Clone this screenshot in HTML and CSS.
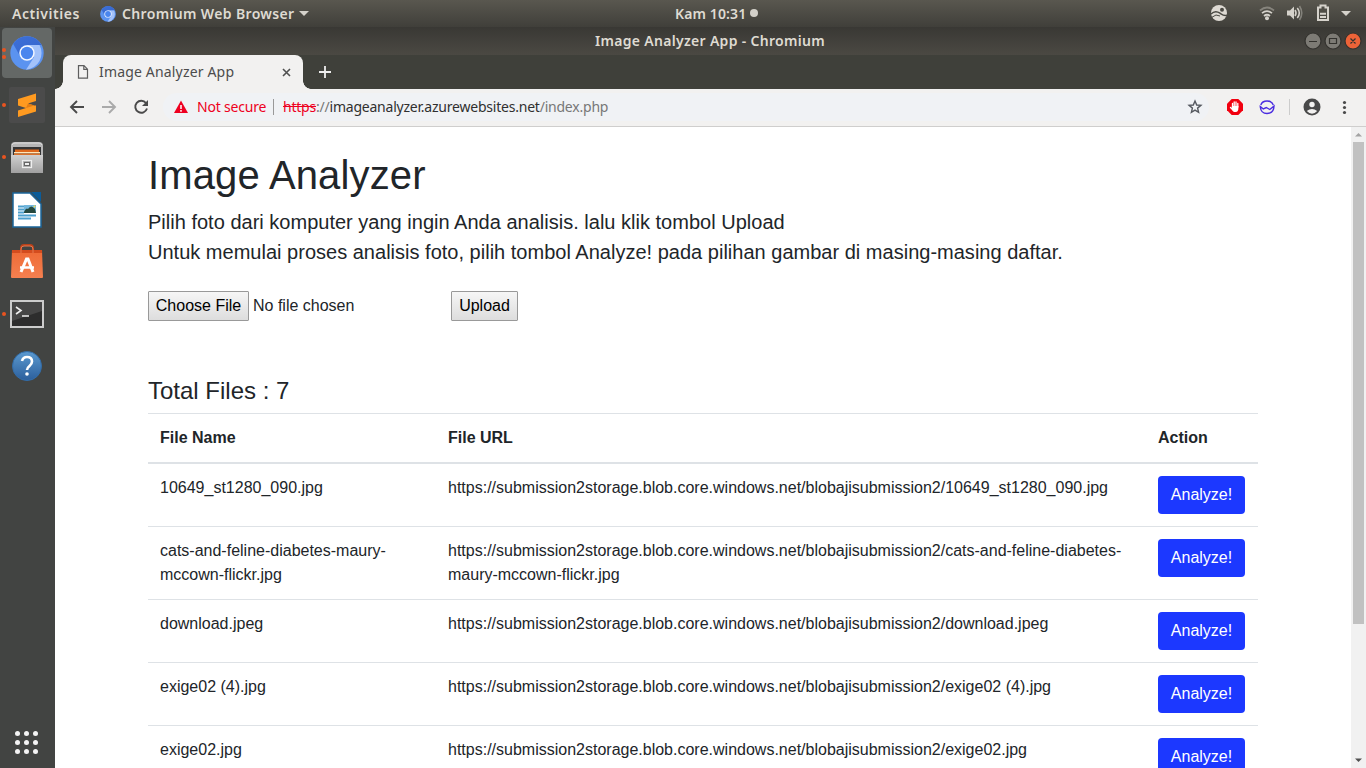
FILE: index.html
```html
<!DOCTYPE html>
<html lang="id">
<head>
<meta charset="utf-8">
<title>Image Analyzer App</title>
<link rel="stylesheet" href="styles.css">
</head>
<body>
<svg width="0" height="0" class="defs">
  <defs>
    <linearGradient id="blueDark" x1="0" y1="0" x2="1" y2="1"><stop offset="0" stop-color="#3d70d8"/><stop offset="1" stop-color="#3565cc"/></linearGradient>
    <linearGradient id="metal" x1="0" y1="0" x2="0" y2="1"><stop offset="0" stop-color="#d0d0d0"/><stop offset="1" stop-color="#a0a0a0"/></linearGradient>
    <linearGradient id="help" x1="0" y1="0" x2="0" y2="1"><stop offset="0" stop-color="#5b9ad0"/><stop offset="1" stop-color="#2c5f9c"/></linearGradient>
    <linearGradient id="bag" x1="0" y1="0" x2="0" y2="1"><stop offset="0" stop-color="#ee6a35"/><stop offset="1" stop-color="#f58050"/></linearGradient>
    <symbol id="chromium" viewBox="0 0 34 34">
      <circle cx="17" cy="17" r="16.700" fill="#5b93f0"/>
      <path d="M17 9h12.500A16.700 16.700 0 0 1 16 33.700l8-12.500Z" fill="#a3c2fa"/>
      <path d="M3.100 7.700A16.700 16.700 0 0 1 31.700 9H17a8 8 0 0 0-7 11Z" fill="url(#blueDark)"/>
      <circle cx="17" cy="17" r="7.700" fill="#f5f8ff"/>
      <circle cx="17" cy="17" r="6.200" fill="#4a86ee"/>
    </symbol>
  </defs>
</svg>
<header class="topbar">
  <span class="activities">Activities</span>
  <svg class="app-icon" width="16" height="16"><use href="#chromium"/></svg>
  <span class="app-name">Chromium Web Browser</span>
  <svg class="caret" width="10" height="5"><path d="M0 0h10L5 5Z" fill="#d5d2cb"/></svg>
  <div class="clock"><span>Kam 10:31</span><i></i></div>
  <svg class="tray" width="156" height="27" viewBox="1210 0 156 27">
    <circle cx="1219" cy="13" r="8" fill="#dedad3"/>
    <path d="M1211 14c2.500-2.500 6-2.800 9-.8 2.500 1.700 4.500 3.300 7 2" fill="none" stroke="#4a4943" stroke-width="1.500"/>
    <path d="M1211.500 17.500l4.500-2.500 4 1" fill="none" stroke="#4a4943" stroke-width="1"/>
    <circle cx="1222" cy="9.800" r="2" fill="#4a4943"/>
    <g fill="none" stroke="#d5d2cb" stroke-width="1.700"><path d="M1260 10.500q7-6 14 0" opacity=".4"/><path d="M1262 13.200q5-4.200 10 0M1264 16q3-2.500 6 0"/></g><circle cx="1267" cy="18.200" r="2" fill="#d5d2cb"/>
    <path d="M1287 10.500h3l4-4v13l-4-4h-3Z" fill="#d5d2cb"/>
    <g fill="none" stroke="#d5d2cb" stroke-width="1.600"><path d="M1295 10q2 3 0 6M1297.300 8q4 5 0 10"/><path d="M1299.500 6q4.500 7 0 14" opacity=".4"/></g>
    <path d="M1318 7.500h2.500v-2h5v2h2.500v12.500h-10Z" fill="none" stroke="#d5d2cb" stroke-width="2"/><path d="M1320 13.800h6M1320 17h6" stroke="#d5d2cb" stroke-width="2"/>
    <path d="M1341 11h10l-5 5Z" fill="#d5d2cb"/>
  </svg>
</header>
<div class="desktop">
  <nav class="dock">
    <div class="launcher active"><svg width="34" height="34"><use href="#chromium"/></svg><i class="dots"><b></b><b></b></i></div>
    <div class="launcher"><svg width="36" height="36" viewBox="0 0 36 36"><rect width="36" height="36" rx="2" fill="#4b4b4b"/><path d="M9 12l18-5.500v7.500l-8 2.500 8 2.500v5.500L9 30v-6.500l8-2.500-8-2.500Z" fill="#ff9a20"/><path d="M17 21l10-3v1l-8-2.500Z" fill="#e47d13"/></svg><i class="dots"><b></b></i></div>
    <div class="launcher"><svg width="34" height="36" viewBox="0 0 34 36"><path d="M1 7q0-4 4-4h24q4 0 4 4v27H1Z" fill="#b6b6b6"/><path d="M2 6q1-2 3-2h24q2 0 3 2" fill="none" stroke="#ddd"/><rect x="3" y="8" width="28" height="8" fill="#343434"/><path d="M5 10.500h24v2.500H5Z" fill="#df681c"/><path d="M4 13h26v1.500H4Z" fill="#ffe5b9"/><path d="M4 14.500h26V16H4Z" fill="#da722c"/><rect x="1" y="16" width="32" height="18" fill="url(#metal)"/><rect x="12.500" y="21.500" width="9" height="7" fill="#aaa" stroke="#eee" stroke-width="1.200"/><rect x="14.500" y="23.500" width="5" height="3" fill="#eee" stroke="#666"/></svg><i class="dots"><b></b></i></div>
    <div class="launcher"><svg width="30" height="36" viewBox="0 0 30 36"><path d="M1 1h17l11 11v23H1Z" fill="#fff" stroke="#1b659a" stroke-width="1.500"/><path d="M19 0h10v10Z" fill="#0b5c99"/><path d="M6 14.500h6M6 17.500h6M6 20.500h6M6 23.500h18M6 26.500h13" stroke="#4da0cd" stroke-width="2"/><rect x="12" y="13" width="12" height="8" fill="#72b6dc"/><path d="M12 20q2-5 4-3 3-5 7 0l1 4H12Z" fill="#26483d"/><circle cx="22.500" cy="14.500" r="1" fill="#f6df4b"/></svg></div>
    <div class="launcher"><svg width="34" height="36" viewBox="0 0 34 36"><path d="M11 8V4q0-3 3-3h6q3 0 3 3v4" fill="none" stroke="#b94119" stroke-width="2"/><path d="M2 6h30l1 27q0 1-1 1H2q-1 0-1-1Z" fill="url(#bag)"/><path d="M2 6h30v3H2Z" fill="#d44c1e"/><path d="M11 9V5q0-3 3-3h6q3 0 3 3v4" fill="none" stroke="#e37a52"/><path d="M11 28l5.500-13h1.500L23 28" fill="none" stroke="#fff" stroke-width="3"/><path d="M10 23.500h14" stroke="#fff" stroke-width="2.500"/></svg></div>
    <div class="launcher"><svg width="34" height="28" viewBox="0 0 34 28"><rect x="1" y="1" width="32" height="26" fill="#2d2d2d" stroke="#ccc" stroke-width="2"/><path d="M2 2h30v9L2 21Z" fill="#464646"/><path d="M6 7l5 3.500L6 14M12 16h7" fill="none" stroke="#eee" stroke-width="1.600"/></svg><i class="dots"><b></b></i></div>
    <div class="launcher"><svg width="32" height="32" viewBox="0 0 32 32"><circle cx="16" cy="16" r="14.500" fill="url(#help)" stroke="#326da9"/><path d="M11 11q1-4 5-4 5 0 5 4.500 0 2.500-2.500 4.500t-2.500 4" fill="none" stroke="#fff" stroke-width="2.600"/><circle cx="16" cy="24" r="1.800" fill="#fff"/></svg></div>
    <div class="apps"><b></b><b></b><b></b><b></b><b></b><b></b><b></b><b></b><b></b></div>
  </nav>
  <section class="window">
    <div class="titlebar"><span>Image Analyzer App - Chromium</span>
      <svg class="controls" width="60" height="20" viewBox="1302 31 60 20"><g stroke="#33322e" stroke-width="1.200"><circle cx="1313" cy="41" r="8" fill="#7d7b75"/><circle cx="1333" cy="41" r="8" fill="#7d7b75"/><circle cx="1353" cy="41" r="8" fill="#ed6338"/><path d="M1309 41.500h8M1329.500 38.500h7v5h-7ZM1350.500 38.500l5 5m0-5l-5 5" fill="none"/></g></svg>
    </div>
    <div class="tabstrip">
      <div class="tab"><svg width="12" height="14" viewBox="0 0 12 14"><path d="M1.500.7h5.500l3.500 3.500v9h-9ZM6.800.7v3.700h3.700" fill="none" stroke="#5e5e5e" stroke-width="1.200"/></svg><span>Image Analyzer App</span><svg class="close" width="9" height="9"><path d="M1 1l7 7M8 1l-7 7" stroke="#505050" stroke-width="1.600"/></svg></div>
      <svg class="plus" width="12" height="12"><path d="M6 0v12M0 6h12" stroke="#eee" stroke-width="1.800"/></svg>
    </div>
    <div class="toolbar">
      <svg class="navigation" width="96" height="37" viewBox="55 89 96 37"><g fill="none" stroke-width="1.900"><path d="M84 107H71M77 101l-6 6 6 6" stroke="#4a4a4a"/><path d="M102 107h13M109 101l6 6-6 6" stroke="#aaa"/><path d="M146 103a6 6 0 1 0 1 5.500" stroke="#4a4a4a"/></g><path d="M148 100v6h-6Z" fill="#4a4a4a"/></svg>
      <div class="address"><svg width="16" height="14" viewBox="0 0 16 14"><path d="M8 .5L15 13H1Z" fill="#ee0021"/><path d="M8 5v4M8 10v1.700" stroke="#fff" stroke-width="1.500"/></svg><span class="warning">Not secure</span><i></i><span class="url"><s>https</s><em>://</em>imageanalyzer.azurewebsites.net<em>/index.php</em></span><svg class="star" width="16" height="16" viewBox="0 0 16 16"><path d="M8 2l1.700 4 4.200.3-3.300 2.800 1 4.200L8 11.100l-3.600 2.200 1-4.200-3.300-2.800 4.200-.3Z" fill="none" stroke="#555960" stroke-width="1.400"/></svg></div>
      <svg class="extensions" width="144" height="37" viewBox="1222 89 144 37"><path d="M1231.700 99h6.600l4.700 4.700v6.600l-4.700 4.700h-6.600l-4.700-4.700v-6.600Z" fill="#f1000f"/><path d="M1232.500 108v-4.500M1234.200 107v-5M1236 107v-5M1237.800 107v-3.500" stroke="#fff" stroke-width="1.300" stroke-linecap="round"/><path d="M1231.900 106h6.500v2q0 4-2.700 4h-1.300q-2 0-2.500-4Z" fill="#fff"/><path d="M1230.500 107.500l2.500 2.500" stroke="#fff" stroke-width="1.400" stroke-linecap="round"/>
      <g fill="none" stroke="#4a2ce0" stroke-width="1.400"><path d="M1260.800 105a6.500 5.500 0 0 1 12.500 0M1260.300 106.500l3 2.500 3-1.500 3.500 2 4.200-3.500q-.3 7.500-7 7.500-6 0-6.700-6.500Z"/></g><path d="M1289.500 99v16" stroke="#ccc"/><circle cx="1312" cy="107" r="8.500" fill="#494949"/><circle cx="1312" cy="104.500" r="2.700" fill="#f2f1f0"/><path d="M1306.800 111q5.200-4 10.400 0-5.200 5.500-10.400 0" fill="#f2f1f0"/><g fill="#494949"><circle cx="1344.500" cy="102.500" r="1.600"/><circle cx="1344.500" cy="107.500" r="1.600"/><circle cx="1344.500" cy="112.500" r="1.600"/></g></svg>
    </div>
    <div class="viewport">
      <main>
        <h1>Image Analyzer</h1>
        <p class="lead">Pilih foto dari komputer yang ingin Anda analisis. lalu klik tombol Upload<br>Untuk memulai proses analisis foto, pilih tombol Analyze! pada pilihan gambar di masing-masing daftar.</p>
        <form class="upload"><button type="button" class="choose">Choose File</button><span>No file chosen</span><button type="button" class="submit">Upload</button></form>
        <h4>Total Files : 7</h4>
        <div class="table">
          <div class="row head"><span>File Name</span><span>File URL</span><span>Action</span></div>
          <div class="row"><span>10649_st1280_090.jpg</span><span>https://submission2storage.blob.core.windows.net/blobajisubmission2/10649_st1280_090.jpg</span><button class="analyze">Analyze!</button></div>
          <div class="row"><span>cats-and-feline-diabetes-maury-<br>mccown-flickr.jpg</span><span>https://submission2storage.blob.core.windows.net/blobajisubmission2/cats-and-feline-diabetes-<br>maury-mccown-flickr.jpg</span><button class="analyze">Analyze!</button></div>
          <div class="row"><span>download.jpeg</span><span>https://submission2storage.blob.core.windows.net/blobajisubmission2/download.jpeg</span><button class="analyze">Analyze!</button></div>
          <div class="row"><span>exige02 (4).jpg</span><span>https://submission2storage.blob.core.windows.net/blobajisubmission2/exige02 (4).jpg</span><button class="analyze">Analyze!</button></div>
          <div class="row"><span>exige02.jpg</span><span>https://submission2storage.blob.core.windows.net/blobajisubmission2/exige02.jpg</span><button class="analyze">Analyze!</button></div>
        </div>
      </main>
      <div class="scrollbar"><svg width="15" height="15"><path d="M4 9.500h7L7.500 6Z" fill="#a3a3a3"/></svg><div class="thumb"></div><svg width="15" height="15"><path d="M4 5.500h7L7.500 9Z" fill="#505050"/></svg></div>
    </div>
  </section>
</div>
</body>
</html>
```
FILE: styles.css
```css
* { box-sizing: border-box; }
body { margin: 0; width: 1366px; height: 768px; overflow: hidden; display: flex; flex-direction: column; font-family: "Noto Sans", sans-serif; }
svg { display: block; flex: none; }
span { white-space: nowrap; }
.defs { position: absolute; }
.topbar { height: 27px; flex: none; display: flex; align-items: center; padding-left: 12px; background: linear-gradient(#59574f, #403f3a); color: #dfdbd2; font-size: 14px; font-weight: 600; line-height: 27px; position: relative; }
.activities { width: 68px; letter-spacing: .55px; }
.app-icon { margin: 0 6px 0 20px; }
.app-name { width: 172px; letter-spacing: .35px; }
.caret { margin-left: 5px; }
.clock { position: absolute; left: 675px; top: 0; height: 26px; display: flex; align-items: center; }
.clock span { width: 75px; letter-spacing: .12px; }
.clock i { width: 8px; height: 8px; border-radius: 50%; background: #d3d0c9; }
.tray { margin-left: auto; }
.desktop { flex: 1; min-height: 0; display: flex; }
.dock { width: 55px; flex: none; background: #424442; display: flex; flex-direction: column; align-items: center; padding: 1px 1px 0 0; gap: 2.2px; }
.launcher { width: 50px; height: 50px; flex: none; display: flex; align-items: center; justify-content: center; position: relative; border-radius: 4px; }
.launcher.active { background: #646866; }
.dots { position: absolute; left: 0; top: 0; height: 50px; display: flex; flex-direction: column; justify-content: center; gap: 3px; }
.dots b { width: 4px; height: 4px; border-radius: 50%; background: #e95420; }
.apps { margin: auto 1px 14px 0; display: grid; grid-template-columns: repeat(3, 5px); gap: 4px; }
.apps b { width: 5px; height: 5px; border-radius: 50%; background: #f4f4f4; }
.window { flex: 1; min-width: 0; display: flex; flex-direction: column; background: #3e3e3a; }
.titlebar { height: 28px; flex: none; display: flex; align-items: center; background: linear-gradient(#393834, #4b4943); color: #dfdbd2; font-size: 14px; font-weight: 600; }
.titlebar span { margin-left: 540px; padding-bottom: 2px; letter-spacing: .31px; }
.controls { margin-left: auto; margin-right: 4px; }
.tabstrip { height: 34px; flex: none; display: flex; align-items: center; padding-left: 8px; background: #3f403a; }
.tab { width: 240px; height: 34px; display: flex; align-items: center; border-radius: 8px 8px 0 0; background: #f2f1f0; padding: 0 12px 0 14px; color: #4c4c4c; font-size: 14px; position: relative; }
.tab::before, .tab::after { content: ""; position: absolute; bottom: 0; width: 8px; height: 8px; }
.tab::before { left: -8px; background: radial-gradient(circle at 0 0, transparent 7.5px, #f2f1f0 8px); }
.tab::after { right: -8px; background: radial-gradient(circle at 100% 0, transparent 7.5px, #f2f1f0 8px); }
.tab span { margin-left: 10px; padding-bottom: 2px; letter-spacing: .17px; }
.close { margin-left: auto; }
.plus { margin-left: 16px; }
.toolbar { height: 38px; flex: none; display: flex; background: #f2f1f0; border-bottom: 1px solid #cfcecd; }
.address { width: 1046px; height: 28px; margin: 4px 0 0 12px; border-radius: 14px; display: flex; align-items: center; padding-left: 10px; background: #f0f2f5; font-size: 14px; }
.warning { color: #ee0021; margin-left: 8px; width: 76px; padding-bottom: 2px; letter-spacing: -.2px; }
.address i { width: 1px; height: 16px; background: #999; margin-right: 9px; }
.url { color: #303030; padding-bottom: 2px; letter-spacing: -.22px; }
.url s { color: #ee0021; }
.url em { color: #777; font-style: normal; }
.star { margin: 0 6px 0 auto; }
.extensions { margin-left: auto; }
.viewport { flex: 1; min-height: 0; display: flex; background: #fff; overflow: hidden; color: #212529; font: 16px/24px "Liberation Sans", Arial, sans-serif; }
main { width: 1110px; margin: 24px 93px 0; flex: none; }
h1 { margin: 0 0 8px; font-size: 40px; line-height: 48px; font-weight: 400; letter-spacing: .14px; }
.lead { margin: 0; font-size: 20px; line-height: 30px; white-space: nowrap; letter-spacing: .01px; }
.upload { margin: 24px 0 0; display: flex; align-items: center; height: 30px; }
.upload button { height: 30px; padding: 0; border: 1px solid #999; border-radius: 1px; background: linear-gradient(#f6f6f6, #dddddd); color: #000; font: 16px "Liberation Sans", Arial, sans-serif; }
.choose { width: 101px; margin-right: 4px; }
.upload .submit { width: 67px; margin-left: auto; margin-right: 740px; }
h4 { margin: 55px 0 8px; font-size: 24px; line-height: 29px; font-weight: 400; }
.row { display: grid; grid-template-columns: 288px 710px 112px; align-items: start; padding: 12px 0; border-top: 1px solid #dee2e6; }
.row > span { padding-left: 12px; }
.head { border-bottom: 2px solid #dee2e6; font-weight: 700; }
.head + .row { border-top: 0; }
.analyze { width: 87px; height: 38px; margin-left: 12px; padding: 0; border: 0; border-radius: 4px; background: #1c38ff; color: #fff; font: 16px "Liberation Sans", Arial, sans-serif; }
.scrollbar { width: 15px; margin-left: auto; display: flex; flex-direction: column; background: #f1f1f1; }
.thumb { width: 11px; height: 482px; margin: 0 2px auto; background: #c1c1c1; }
```
